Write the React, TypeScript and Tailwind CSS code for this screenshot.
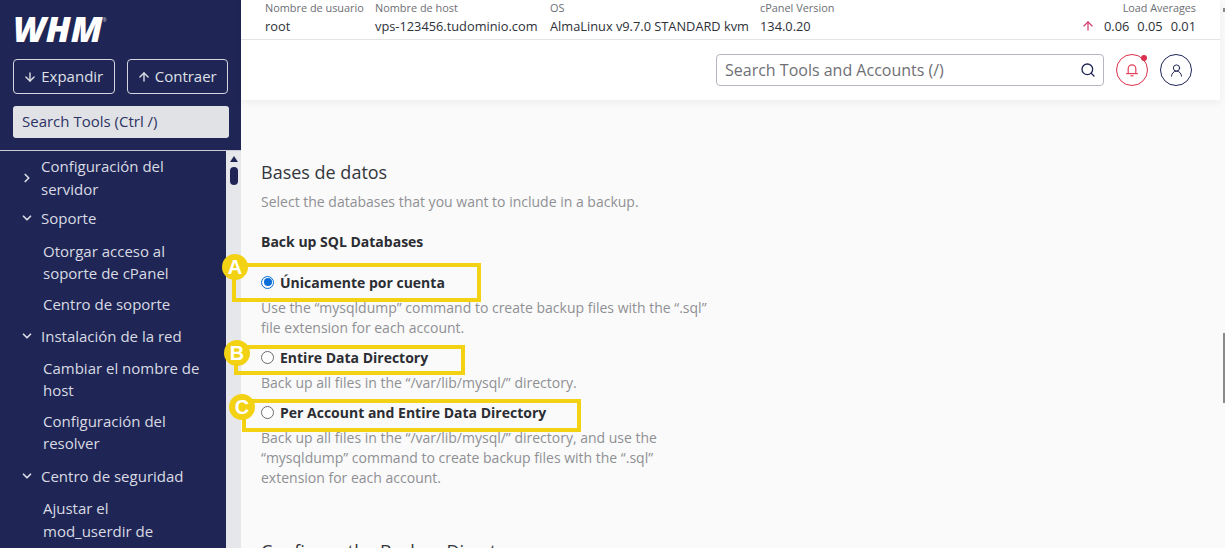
import React from 'react';
import { ArrowDown, ArrowUp, ChevronDown, ChevronRight, Search, UserRound } from 'lucide-react';

const font = { fontFamily: '"Open Sans", sans-serif' };

interface NavItem {
  label: string[];
  icon?: 'right' | 'down';
  mt: string;
}

const nav: NavItem[] = [
  { label: ['Configuración del', 'servidor'], icon: 'right', mt: 'mt-[4px]' },
  { label: ['Soporte'], icon: 'down', mt: 'mt-[7px]' },
  { label: ['Otorgar acceso al', 'soporte de cPanel'], mt: 'mt-[10px]' },
  { label: ['Centro de soporte'], mt: 'mt-[8px]' },
  { label: ['Instalación de la red'], icon: 'down', mt: 'mt-[10px]' },
  { label: ['Cambiar el nombre de', 'host'], mt: 'mt-[9px]' },
  { label: ['Configuración del', 'resolver'], mt: 'mt-[8px]' },
  { label: ['Centro de seguridad'], icon: 'down', mt: 'mt-[10px]' },
  { label: ['Ajustar el', 'mod_userdir de'], mt: 'mt-[10px]' },
];

function Sidebar() {
  return (
    <aside className="w-[241px] shrink-0 h-full flex flex-col bg-[#1f2655]">
      <div className="w-[241px] h-[151px] shrink-0 border-b border-[#c9cbd6] px-[13px] pt-[11px]">
        <div className="h-[36px] flex items-start text-white italic font-extrabold text-[35px] leading-[36px]">
          WHM<span className="text-[5px] leading-[8px] not-italic font-normal mt-[5px] text-[#c9cbd6]">®</span>
        </div>
        <div className="flex gap-[12px] mt-[12px]">
          <button className="w-[102px] h-[35px] rounded-[4px] border border-[#d5d6df] text-[#dfe0e6] text-[15px] flex items-center justify-center gap-[4px] pr-[1px]">
            <ArrowDown size={14} strokeWidth={2.4} />
            Expandir
          </button>
          <button className="w-[102px] h-[35px] rounded-[4px] border border-[#d5d6df] text-[#dfe0e6] text-[15px] flex items-center justify-center gap-[4px] pr-[1px]">
            <ArrowUp size={14} strokeWidth={2.4} />
            Contraer
          </button>
        </div>
        <div className="w-[216px] h-[32px] mt-[12px] rounded-[3px] bg-[#e1e2e6] text-[#2c3263] text-[15px] leading-[31px] px-[9px]">
          Search Tools (Ctrl /)
        </div>
      </div>
      <div className="flex flex-1 min-h-0">
        <nav className="w-[226px] overflow-hidden text-[15px] leading-[22.5px] text-[#d9dae3]">
          {nav.map((item) => (
            <div key={item.label[0]} className={`flex ${item.mt} ${item.icon ? 'pl-[20px]' : 'pl-[43px]'}`}>
              {item.icon === 'right' && <ChevronRight size={14} strokeWidth={3} className="self-center mr-[7px] shrink-0" />}
              {item.icon === 'down' && <ChevronDown size={14} strokeWidth={3} className="mt-[4px] mr-[7px] shrink-0" />}
              <div>
                {item.label.map((line) => (
                  <div key={line}>{line}</div>
                ))}
              </div>
            </div>
          ))}
        </nav>
        <div className="w-[15px] bg-[#e6e7ea] flex flex-col items-center pt-[5px]">
          <div className="w-0 h-0 border-x-[4px] border-x-transparent border-b-[6px] border-b-[#1f2655]" />
          <div className="w-[8px] h-[18px] mt-[5px] rounded-full bg-[#1f2655]" />
        </div>
      </div>
    </aside>
  );
}

function Stat({ label, value, className }: { label: string; value: string; className: string }) {
  return (
    <div className={className}>
      <div className="text-[10.9px] leading-[15px] text-[#6d6e74]">{label}</div>
      <div className="text-[12.8px] leading-[18px] mt-[2px] text-[#2e3138] whitespace-nowrap">{value}</div>
    </div>
  );
}

function Header() {
  return (
    <header className="bg-white shadow-[0_2px_8px_rgba(0,0,0,0.06)] shrink-0 mr-[5px] relative">
      <div className="h-[40px] border-b border-[#e4e4e6] flex pl-[24px] pt-0">
        <Stat label="Nombre de usuario" value="root" className="w-[110px]" />
        <Stat label="Nombre de host" value="vps-123456.tudominio.com" className="w-[175px]" />
        <Stat label="OS" value="AlmaLinux v9.7.0 STANDARD kvm" className="w-[210px]" />
        <Stat label="cPanel Version" value="134.0.20" className="w-[120px]" />
        <div className="ml-auto pr-[24px] text-right">
          <div className="text-[10.8px] leading-[15px] text-[#6d6e74]">Load Averages</div>
          <div className="flex items-center justify-end gap-[8px] text-[12.8px] leading-[18px] mt-[2px] text-[#2e3138]">
            <ArrowUp size={14} strokeWidth={2} className="text-[#d6336c] mr-[1px]" />
            <span>0.06</span>
            <span>0.05</span>
            <span>0.01</span>
          </div>
        </div>
      </div>
      <div className="h-[60px] flex items-center justify-end pr-[28px] gap-[12px]">
        <div className="w-[388px] h-[32px] rounded-[4px] border border-[#b5b6c2] flex items-center justify-between pl-[8px] pr-[7px] text-[16px] text-[#6f7075]">
          Search Tools and Accounts (/)
          <Search size={16} strokeWidth={2} className="text-[#1f2655]" />
        </div>
        <div className="relative w-[32px] h-[32px] rounded-full border border-[#dc2f4b] flex items-center justify-center">
          <svg width="14" height="14" viewBox="0 0 14 14" fill="none" stroke="#e2405a" strokeWidth="1.2">
            <path d="M3.2 10.5V5.6a3.8 3.8 0 0 1 7.6 0v4.9" />
            <path d="M1.2 10.6h11.6" />
            <path d="M5.5 12.8h3" />
          </svg>
          <span className="absolute top-[0px] right-[0px] w-[6px] h-[6px] rounded-full bg-[#dc2f4b]" />
        </div>
        <div className="w-[32px] h-[32px] rounded-full border border-[#1f2655] flex items-center justify-center">
          <UserRound size={15} strokeWidth={1.6} className="text-[#1f2655]" />
        </div>
      </div>
    </header>
  );
}

function Option({ checked, label, lines, mt, badge, badgeClass, boxClass }: {
  checked?: boolean;
  label: string;
  lines: string[];
  mt: string;
  badge: string;
  badgeClass: string;
  boxClass: string;
}) {
  return (
    <div className={`${mt} relative`}>
      <div className="flex items-center gap-[6px] h-[20px]">
        {checked ? (
          <span className="w-[13px] h-[13px] rounded-full border-[1.5px] border-[#0a6fd8] flex items-center justify-center">
            <span className="w-[8px] h-[8px] rounded-full bg-[#0a6fd8]" />
          </span>
        ) : (
          <span className="w-[13px] h-[13px] rounded-full border border-[#6b6b70] bg-white" />
        )}
        <span className="font-bold text-[14px] text-[#2b2d33]">{label}</span>
      </div>
      <div className="text-[14px] leading-[20px] text-[#8f9094] mt-[6px] w-[480px]">
        {lines.map((line) => (
          <div key={line}>{line}</div>
        ))}
      </div>
      <div className={`absolute border-[4px] border-[#f3d113] ${boxClass}`} />
      <div className={`absolute w-[26px] h-[26px] rounded-full bg-[#f3d113] text-white font-bold text-[20px] leading-[26px] text-center ${badgeClass}`} style={{ fontFamily: '"Liberation Sans", sans-serif' }}>
        {badge}
      </div>
    </div>
  );
}

export default function App() {
  return (
    <div className="w-[1225px] h-[548px] overflow-hidden flex bg-[#fafafa]" style={font}>
      <Sidebar />
      <main className="flex-1 min-w-0 flex flex-col relative">
        <Header />
        <div className="pl-[20px] pt-[60px] flex-1">
          <h2 className="text-[18px] leading-[25px] text-[#34363c]">Bases de datos</h2>
          <p className="text-[14px] leading-[20px] text-[#8f9094] mt-[7px]">Select the databases that you want to include in a backup.</p>
          <p className="text-[14px] leading-[20px] font-bold text-[#2b2d33] mt-[20px]">Back up SQL Databases</p>
          <Option
            checked
            label="Únicamente por cuenta"
            lines={['Use the “mysqldump” command to create backup files with the “.sql”', 'file extension for each account.']}
            mt="mt-[20px]"
            badge="A"
            badgeClass="left-[-39px] top-[-18px]"
            boxClass="left-[-29px] top-[-9px] w-[249px] h-[39px]"
          />
          <Option
            label="Entire Data Directory"
            lines={['Back up all files in the “/var/lib/mysql/” directory.']}
            mt="mt-[9px]"
            badge="B"
            badgeClass="left-[-37px] top-[-7px]"
            boxClass="left-[-27px] top-[-2px] w-[231px] h-[30px]"
          />
          <Option
            label="Per Account and Entire Data Directory"
            lines={['Back up all files in the “/var/lib/mysql/” directory, and use the', '“mysqldump” command to create backup files with the “.sql”', 'extension for each account.']}
            mt="mt-[9px]"
            badge="C"
            badgeClass="left-[-32px] top-[-8px]"
            boxClass="left-[-19px] top-[-3px] w-[339px] h-[33px]"
          />
          <h2 className="text-[18px] leading-[25px] text-[#34363c] mt-[51px] whitespace-nowrap">Configure the Backup Directory</h2>
        </div>
        <div className="absolute right-0 top-[8px] w-[2px] h-[4px] bg-[#8a8a8a]" />
        <div className="absolute right-0 top-[333px] w-[2px] h-[70px] bg-[#8a8a8a]" />
      </main>
    </div>
  );
}
